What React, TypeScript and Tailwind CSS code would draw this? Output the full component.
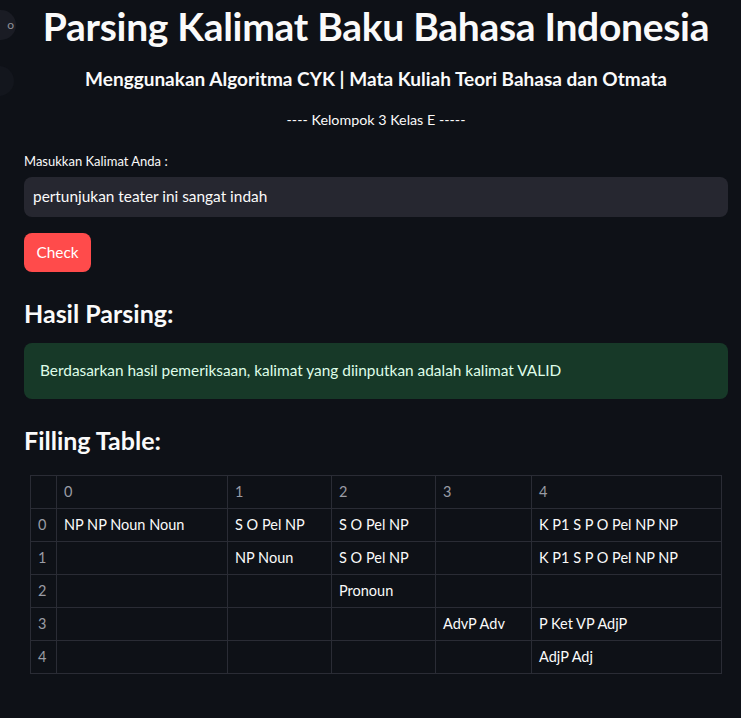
import React from 'react';

const cols = ['0', '1', '2', '3', '4'];
const widths = ['w-[171px]', 'w-[104px]', 'w-[104px]', 'w-[96px]', 'w-[190px]'];

const rows: string[][] = [
  ['NP NP Noun Noun', 'S O Pel NP', 'S O Pel NP', '', 'K P1 S P O Pel NP NP'],
  ['', 'NP Noun', 'S O Pel NP', '', 'K P1 S P O Pel NP NP'],
  ['', '', 'Pronoun', '', ''],
  ['', '', '', 'AdvP Adv', 'P Ket VP AdjP'],
  ['', '', '', '', 'AdjP Adj'],
];

function FillingTable() {
  return (
    <table className="mx-[6px] mt-[19px] border-collapse table-fixed text-[14.5px]">
      <thead>
        <tr className="h-[33px]">
          <th className="w-[26px] border border-[#2a2c35]"></th>
          {cols.map((c, i) => (
            <th key={c} className={`${widths[i]} border border-[#2a2c35] px-[7px] text-left font-normal text-[#9a9ca5]`}>
              {c}
            </th>
          ))}
        </tr>
      </thead>
      <tbody>
        {rows.map((r, ri) => (
          <tr key={ri} className="h-[33px]">
            <td className="border border-[#2a2c35] px-[7px] text-[#9a9ca5]">{ri}</td>
            {r.map((cell, ci) => (
              <td key={ci} className="border border-[#2a2c35] px-[7px] text-[#fafafa] whitespace-nowrap">
                {cell}
              </td>
            ))}
          </tr>
        ))}
      </tbody>
    </table>
  );
}

export default function App() {
  return (
    <div
      className="relative min-h-[718px] w-full overflow-hidden bg-[#0e1117] text-[#fafafa]"
      style={{ fontFamily: "Lato, 'Noto Sans', sans-serif" }}
    >
      {/* leftover floating buttons cut by the edge */}
      <div className="absolute -left-[14px] top-[10px] flex h-[30px] w-[30px] items-center justify-end rounded-full bg-[#1a1c24] pr-[2px]">
        <span className="text-[12px] leading-none text-[#8d8f97]">o</span>
      </div>
      <div className="absolute -left-[16px] top-[66px] h-[30px] w-[30px] rounded-full bg-[#13161d]"></div>

      <div className="pl-6 pr-[13px] pt-[2px]">
        <h1 className="text-center text-[39px] font-bold leading-[48px] tracking-[-0.3px]">
          Parsing Kalimat Baku Bahasa Indonesia
        </h1>
        <h4 className="mt-[17px] text-center text-[19px] font-bold leading-[24px]">
          Menggunakan Algoritma CYK | Mata Kuliah Teori Bahasa dan Otmata
        </h4>
        <p className="mt-[19px] text-center text-[14.3px] leading-[20px]">---- Kelompok 3 Kelas E -----</p>

        <label className="mt-[23px] block text-[13px] leading-[16px]">Masukkan Kalimat Anda :</label>
        <div className="mt-[8px] flex h-[40px] items-center rounded-lg bg-[#262730] px-[9px] text-[15.4px]">
          pertunjukan teater ini sangat indah
        </div>
        <button className="mt-[16px] h-[39px] w-[67px] rounded-lg bg-[#ff4b4b] text-[15.4px] text-white">Check</button>

        <h3 className="mt-[25px] text-[25px] font-bold leading-[32px]">Hasil Parsing:</h3>
        <div className="mt-[14px] flex h-[56px] items-center rounded-lg bg-[#173928] px-4 text-[15.4px] text-[#dffde9]">
          Berdasarkan hasil pemeriksaan, kalimat yang diinputkan adalah kalimat VALID
        </div>

        <h3 className="mt-[25px] text-[25px] font-bold leading-[32px]">Filling Table:</h3>
        <FillingTable />
      </div>
    </div>
  );
}
